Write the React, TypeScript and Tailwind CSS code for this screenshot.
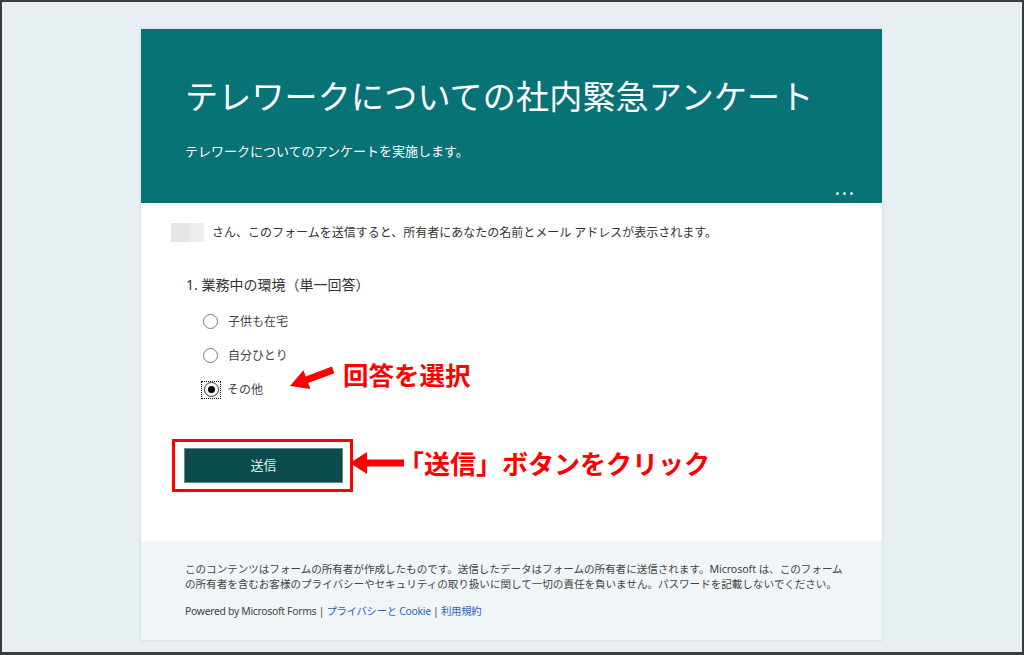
import React from "react";

const jp = { fontFamily: '"Noto Sans", "Noto Sans CJK JP", sans-serif' };

const options = ["子供も在宅", "自分ひとり", "その他"];

const Radio = ({ checked }: { checked: boolean }) =>
  checked ? (
    <div className="w-[20px] h-[18px] -ml-[2px] mr-[6px] border border-dotted border-black flex items-center justify-center">
      <div className="w-[15px] h-[15px] rounded-full border-[1.5px] border-[#333] flex items-center justify-center">
        <div className="w-[7px] h-[7px] rounded-full bg-black" />
      </div>
    </div>
  ) : (
    <div className="w-[15px] h-[15px] mr-[10px] rounded-full border-[1.5px] border-[#7a7a7a]" />
  );

const App = () => {
  return (
    <div
      className="relative w-[1024px] h-[655px] overflow-hidden border-2 border-b-[3px] border-[#3c3c3c] bg-[#e8eff2] pt-[27px] pl-[139px]"
      style={jp}
    >
      <div className="w-[741px] shadow-[0_0_3px_rgba(0,0,0,0.12)]">
        {/* header */}
        <div className="relative h-[174px] bg-[#077377] px-[44px] pt-[48px] text-white">
          <h1 className="text-[33px] leading-[40px] tracking-[0.2px]">テレワークについての社内緊急アンケート</h1>
          <p className="mt-[25px] text-[13px] leading-[18px]">テレワークについてのアンケートを実施します。</p>
          <div className="absolute right-[29px] bottom-[8px] flex gap-[4px]">
            <span className="w-[3px] h-[3px] rounded-full bg-white/90" />
            <span className="w-[3px] h-[3px] rounded-full bg-white/90" />
            <span className="w-[3px] h-[3px] rounded-full bg-white/90" />
          </div>
        </div>

        {/* body */}
        <div className="h-[338px] bg-white pt-[20px] px-[30px] text-[#333]">
          <div className="flex items-center h-[19px]">
            <div className="w-[19px] h-[19px] bg-[#e6e6e6]" />
            <div className="w-[14px] h-[19px] bg-[#eeeeee]" />
            <span className="ml-[8px] text-[12px] leading-[19px]">
              さん、このフォームを送信すると、所有者にあなたの名前とメール アドレスが表示されます。
            </span>
          </div>

          <div className="mt-[33px] ml-[15px] text-[14px] leading-[20px]">1. 業務中の環境（単一回答）</div>

          <div className="mt-[19px] ml-[32px] flex flex-col gap-[19px]">
            {options.map((o, i) => (
              <div key={o} className="flex items-center h-[15px]">
                <Radio checked={i === 2} />
                <span className="text-[12px] leading-[15px] text-[#444]">{o}</span>
              </div>
            ))}
          </div>

          <div className="mt-[42px] ml-[1px] w-[181px] h-[53px] border-[3px] border-[#ff0000] pt-[6px] pl-[9px]">
            <button className="w-[159px] h-[35px] bg-[#0b4b4d] text-[#e6efef] text-[13px] border border-[#6a8a8b]">
              送信
            </button>
          </div>
        </div>

        {/* footer */}
        <div className="h-[99px] bg-[#f0f5f8] px-[44px] pt-[21px] text-[#444]">
          <p className="text-[10.6px] leading-[15px] tracking-[-0.05px] whitespace-nowrap">
            このコンテンツはフォームの所有者が作成したものです。送信したデータはフォームの所有者に送信されます。Microsoft は、このフォーム
            <br />
            の所有者を含むお客様のプライバシーやセキュリティの取り扱いに関して一切の責任を負いません。パスワードを記載しないでください。
          </p>
          <p className="mt-[12px] text-[10.4px] leading-[15px] tracking-[-0.3px]">
            Powered by Microsoft Forms | <span className="text-[#2d63b8]">プライバシーと Cookie</span> |{" "}
            <span className="text-[#2d63b8]">利用規約</span>
          </p>
        </div>
      </div>

      {/* annotations */}
      <svg className="absolute left-[-2px] top-[-2px] pointer-events-none" width="1024" height="655">
        <polygon
          fill="#ff0000"
          points="290,386 303.4,370.3 305.7,376.4 331.9,366.6 334.3,373.2 308.1,383 310.4,389.1"
        />
        <polygon fill="#ff0000" points="350,463 367,452 367,459.5 404,459.5 404,466.5 367,466.5 367,474" />
      </svg>
      <div className="absolute left-[341px] top-[356px] text-[25.5px] leading-[34px] font-bold text-[#ff0000]">
        回答を選択
      </div>
      <div className="absolute left-[396px] top-[445px] text-[26px] leading-[34px] font-bold text-[#ff0000]">
        「送信」ボタンをクリック
      </div>
    </div>
  );
};

export default App;
